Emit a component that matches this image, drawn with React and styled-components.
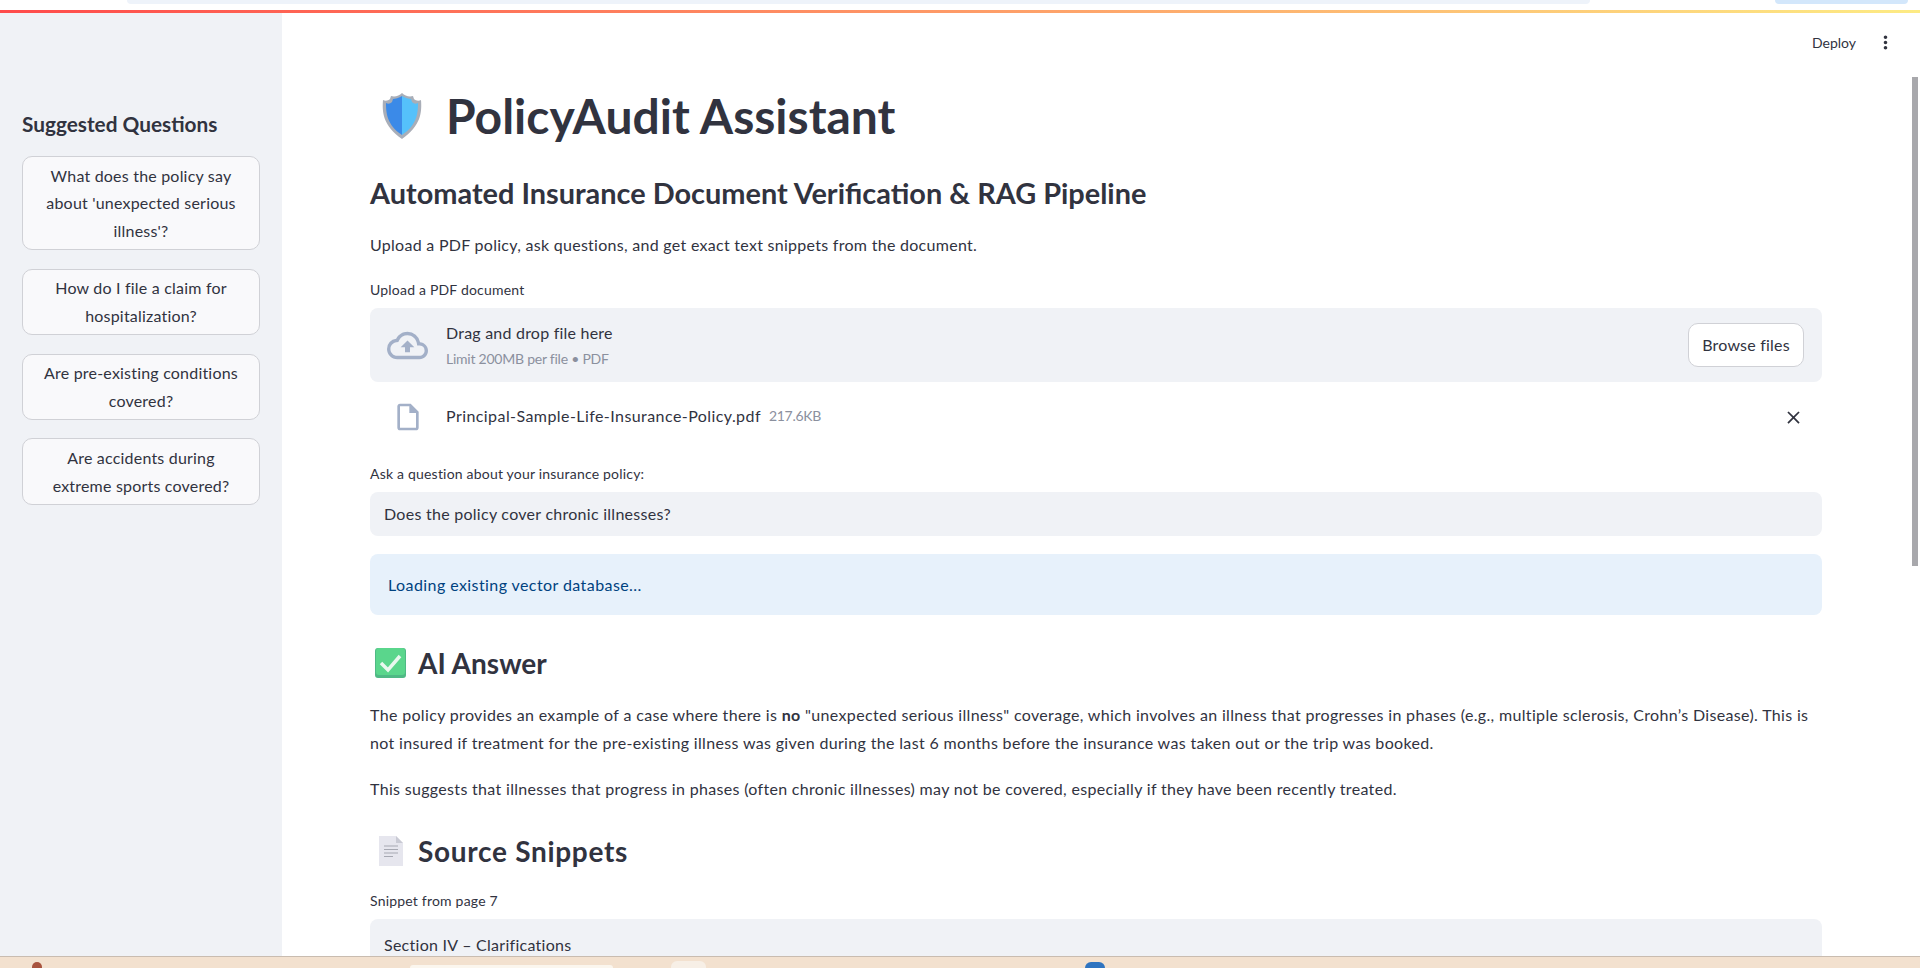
import styled, { createGlobalStyle } from 'styled-components';
import { MdOutlineCloudUpload, MdOutlineInsertDriveFile, MdClose, MdMoreVert } from 'react-icons/md';

const GlobalStyle = createGlobalStyle`
  html, body {
    margin: 0;
    height: 100%;
    overflow: hidden;
    background: #fff;
  }
  * {
    box-sizing: border-box;
  }
`;

const Page = styled.div`
  height: 968px;
  display: flex;
  flex-direction: column;
  font-family: Lato, 'Noto Sans', sans-serif;
  font-size: 16px;
  letter-spacing: 0.27px;
  color: #31333f;
`;

const BrowserStrip = styled.div`
  height: 10px;
  flex: none;
  display: flex;
  padding-left: 127px;
  background: #fff;
`;

const AddressPill = styled.div`
  width: 1463px;
  height: 4px;
  background: #eef3fa;
  border-radius: 0 0 10px 10px;
`;

const ProfilePill = styled.div`
  width: 133px;
  height: 4px;
  margin-left: 185px;
  background: #d3e7fb;
  border-radius: 0 0 10px 10px;
`;

const Decoration = styled.div`
  height: 3px;
  flex: none;
  background: linear-gradient(90deg, #ff4b4b, #fdeb84);
`;

const Body = styled.div`
  flex: 1;
  min-height: 0;
  display: flex;
`;

const Sidebar = styled.aside`
  width: 282px;
  flex: none;
  padding: 97px 22px 0;
  background: #f0f2f6;
`;

const SidebarTitle = styled.h3`
  margin: 0 0 16px;
  height: 30px;
  font-size: 20.8px;
  line-height: 28px;
  font-weight: 700;
  letter-spacing: 0;
`;

const SuggestionList = styled.div`
  display: flex;
  flex-direction: column;
  gap: 18.3px;
`;

const Suggestion = styled.button`
  padding: 4.5px 14px;
  font: inherit;
  line-height: 27.8px;
  letter-spacing: 0.2px;
  color: inherit;
  text-align: center;
  background: #f9f9fb;
  border: 1px solid #d0d1d6;
  border-radius: 10px;
`;

const Main = styled.main`
  flex: 1;
  min-width: 0;
  display: flex;
  flex-direction: column;
  overflow: hidden;
  background: #fff;
`;

const Toolbar = styled.div`
  height: 59px;
  flex: none;
  display: flex;
  align-items: center;
  justify-content: flex-end;
  gap: 19px;
  padding: 0 16px 1px 0;
  font-size: 14px;
  letter-spacing: 0;
`;

const MenuIcon = styled(MdMoreVert)`
  font-size: 21px;
`;

const Content = styled.div`
  padding: 0 90px 0 88px;
`;

const TitleRow = styled.div`
  height: 88px;
  display: flex;
  align-items: center;
  gap: 24px;
  padding-left: 12px;
`;

const Title = styled.h1`
  margin: 0;
  font-size: 48px;
  line-height: 60px;
  font-weight: 700;
  letter-spacing: 0;
`;

const Subtitle = styled.h2`
  margin: 15px 0 20px;
  font-size: 28.9px;
  line-height: 36px;
  font-weight: 700;
  letter-spacing: 0;
`;

const Text = styled.p`
  margin: 0 0 ${({ $after }) => $after ?? 18}px;
  line-height: 28px;
  letter-spacing: ${({ $spacing }) => $spacing ?? 0.28}px;
`;

const FieldLabel = styled.div`
  height: 20px;
  margin-bottom: 8px;
  font-size: 14px;
  line-height: 20px;
  letter-spacing: 0.2px;
`;

const Dropzone = styled.div`
  height: 74px;
  display: flex;
  align-items: center;
  padding: 0 18px 0 17px;
  background: #f0f2f6;
  border-radius: 8px;
`;

const CloudIcon = styled(MdOutlineCloudUpload)`
  font-size: 41px;
  flex: none;
  color: #a3b0c8;
`;

const DropText = styled.div`
  flex: 1;
  margin-left: 18px;
  padding-top: 2px;
  line-height: 26px;
  letter-spacing: 0.22px;
`;

const DropHint = styled.div`
  font-size: 14px;
  letter-spacing: -0.24px;
  color: #8b909e;
`;

const BrowseButton = styled.button`
  width: 116px;
  height: 44px;
  padding: 0 0 2px;
  font: inherit;
  letter-spacing: 0.2px;
  color: inherit;
  background: #fff;
  border: 1px solid #d0d1d6;
  border-radius: 10px;
`;

const FileRow = styled.div`
  height: 68px;
  margin-bottom: 14px;
  display: flex;
  align-items: center;
  padding: 0 18px 2px 22px;
`;

const FileIcon = styled(MdOutlineInsertDriveFile)`
  font-size: 32px;
  flex: none;
  margin-top: 4px;
  color: #a3b0c8;
`;

const FileName = styled.span`
  margin-left: 22px;
  letter-spacing: 0.43px;
`;

const FileSize = styled.span`
  flex: 1;
  margin-left: 8px;
  font-size: 14px;
  letter-spacing: -0.3px;
  color: #8b909e;
`;

const CloseIcon = styled(MdClose)`
  font-size: 21px;
  margin-top: 4px;
`;

const QuestionInput = styled.div`
  height: 44px;
  margin-bottom: 18px;
  padding: 0 14px 1px;
  display: flex;
  align-items: center;
  background: #f0f2f6;
  border-radius: 8px;
`;

const InfoBox = styled.div`
  height: 61px;
  margin-bottom: 24px;
  padding: 0 18px 1px;
  display: flex;
  align-items: center;
  letter-spacing: 0.42px;
  color: #004280;
  background: #e7f1fb;
  border-radius: 8px;
`;

const SectionTitle = styled.h3`
  height: 48px;
  margin: 0 0 ${({ $after }) => $after}px;
  display: flex;
  align-items: center;
  gap: ${({ $gap }) => $gap}px;
  padding-left: ${({ $indent }) => $indent}px;
  font-size: 28px;
  font-weight: 700;
  letter-spacing: ${({ $spacing }) => $spacing ?? 0}px;
`;

const Snippet = styled.div`
  height: 60px;
  padding: 12px 14px;
  line-height: 28px;
  background: #f0f2f6;
  border-radius: 8px 8px 0 0;
`;

const Scrollbar = styled.div`
  width: 8px;
  flex: none;
  padding-top: 64px;
  background: #fff;
`;

const ScrollThumb = styled.div`
  width: 6px;
  height: 489px;
  background: #a8a8ac;
`;

const Taskbar = styled.div`
  height: 12px;
  flex: none;
  display: flex;
  align-items: flex-end;
  background: #f3e1cf;
  border-top: 1px solid #c9bcb0;
`;

const TrayBadge = styled.div`
  width: ${({ $w }) => $w}px;
  height: ${({ $h }) => $h}px;
  margin-left: ${({ $gap }) => $gap}px;
  background: ${({ $bg }) => $bg};
  border-radius: ${({ $round }) => ($round ? '10px 10px' : '6px 6px')} 0 0;
`;

function ShieldEmoji() {
  return (
    <svg width="40" height="48" viewBox="0 0 40 48">
      <path d="M20 1c3 3 7 4 11 3l1 3c2 2 5 2 7 1 1 12 0 26-19 39C1 34 0 20 1 8c2 1 5 1 7-1l1-3c4 1 8 0 11-3z" fill="#a9aeb8" />
      <path d="M20 4c-3 2-7 3-9 3l-1 3c-2 2-4 2-6 1 0 10 1 22 16 32z" fill="#3b8ae8" />
      <path d="M20 4c3 2 7 3 9 3l1 3c2 2 4 2 6 1 0 10-1 22-16 32z" fill="#55c1fb" />
    </svg>
  );
}

function CheckEmoji() {
  return (
    <svg width="31" height="30" viewBox="0 0 31 30">
      <rect width="31" height="30" rx="3" fill="#4fb985" />
      <rect x="1" y="0" width="29" height="27" rx="3" fill="#5ad68c" />
      <path d="M6 15l7 7L25 8" fill="none" stroke="#e9f8ef" strokeWidth="3.5" />
    </svg>
  );
}

function DocEmoji() {
  return (
    <svg width="24" height="30" viewBox="0 0 24 30">
      <path d="M0 0h17l7 7v23H0z" fill="#e6e6ee" />
      <path d="M17 0l7 7h-7z" fill="#c9cad4" />
      <path d="M5 10h14M5 13.500h14M5 17h14M5 20.500h9" stroke="#a6a8b2" strokeWidth="1.2" />
    </svg>
  );
}

const suggestions = [
  "What does the policy say about 'unexpected serious illness'?",
  'How do I file a claim for hospitalization?',
  'Are pre-existing conditions covered?',
  'Are accidents during extreme sports covered?',
];

export default function App() {
  return (
    <Page>
      <GlobalStyle />
      <BrowserStrip>
        <AddressPill />
        <ProfilePill />
      </BrowserStrip>
      <Decoration />
      <Body>
        <Sidebar>
          <SidebarTitle>Suggested Questions</SidebarTitle>
          <SuggestionList>
            {suggestions.map((q) => (
              <Suggestion key={q}>{q}</Suggestion>
            ))}
          </SuggestionList>
        </Sidebar>
        <Main>
          <Toolbar>
            <span>Deploy</span>
            <MenuIcon />
          </Toolbar>
          <Content>
            <TitleRow>
              <ShieldEmoji />
              <Title>PolicyAudit Assistant</Title>
            </TitleRow>
            <Subtitle>Automated Insurance Document Verification &amp; RAG Pipeline</Subtitle>
            <Text $after={21}>Upload a PDF policy, ask questions, and get exact text snippets from the document.</Text>
            <FieldLabel>Upload a PDF document</FieldLabel>
            <Dropzone>
              <CloudIcon />
              <DropText>
                Drag and drop file here
                <DropHint>Limit 200MB per file • PDF</DropHint>
              </DropText>
              <BrowseButton>Browse files</BrowseButton>
            </Dropzone>
            <FileRow>
              <FileIcon />
              <FileName>Principal-Sample-Life-Insurance-Policy.pdf</FileName>
              <FileSize>217.6KB</FileSize>
              <CloseIcon />
            </FileRow>
            <FieldLabel>Ask a question about your insurance policy:</FieldLabel>
            <QuestionInput>Does the policy cover chronic illnesses?</QuestionInput>
            <InfoBox>Loading existing vector database...</InfoBox>
            <SectionTitle $indent={5} $gap={12} $after={14}>
              <CheckEmoji />
              AI Answer
            </SectionTitle>
            <Text $spacing={0.34}>
              The policy provides an example of a case where there is <b>no</b> "unexpected serious illness" coverage, which involves an illness that progresses in phases (e.g., multiple sclerosis, Crohn’s Disease). This is not insured if treatment for the pre-existing illness was given during the last 6 months before the insurance was taken out or the trip was booked.
            </Text>
            <Text $after={24} $spacing={0.32}>
              This suggests that illnesses that progress in phases (often chronic illnesses) may not be covered, especially if they have been recently treated.
            </Text>
            <SectionTitle $indent={9} $gap={15} $after={16} $spacing={0.7}>
              <DocEmoji />
              Source Snippets
            </SectionTitle>
            <FieldLabel>Snippet from page 7</FieldLabel>
            <Snippet>Section IV – Clarifications</Snippet>
          </Content>
        </Main>
        <Scrollbar>
          <ScrollThumb />
        </Scrollbar>
      </Body>
      <Taskbar>
        <TrayBadge $w={10} $h={6} $gap={32} $bg="#a8533e" $round />
        <TrayBadge $w={203} $h={3} $gap={368} $bg="#fbf6ee" />
        <TrayBadge $w={35} $h={7} $gap={58} $bg="#f7efe6" />
        <TrayBadge $w={20} $h={6} $gap={379} $bg="#2f74c0" $round />
      </Taskbar>
    </Page>
  );
}
